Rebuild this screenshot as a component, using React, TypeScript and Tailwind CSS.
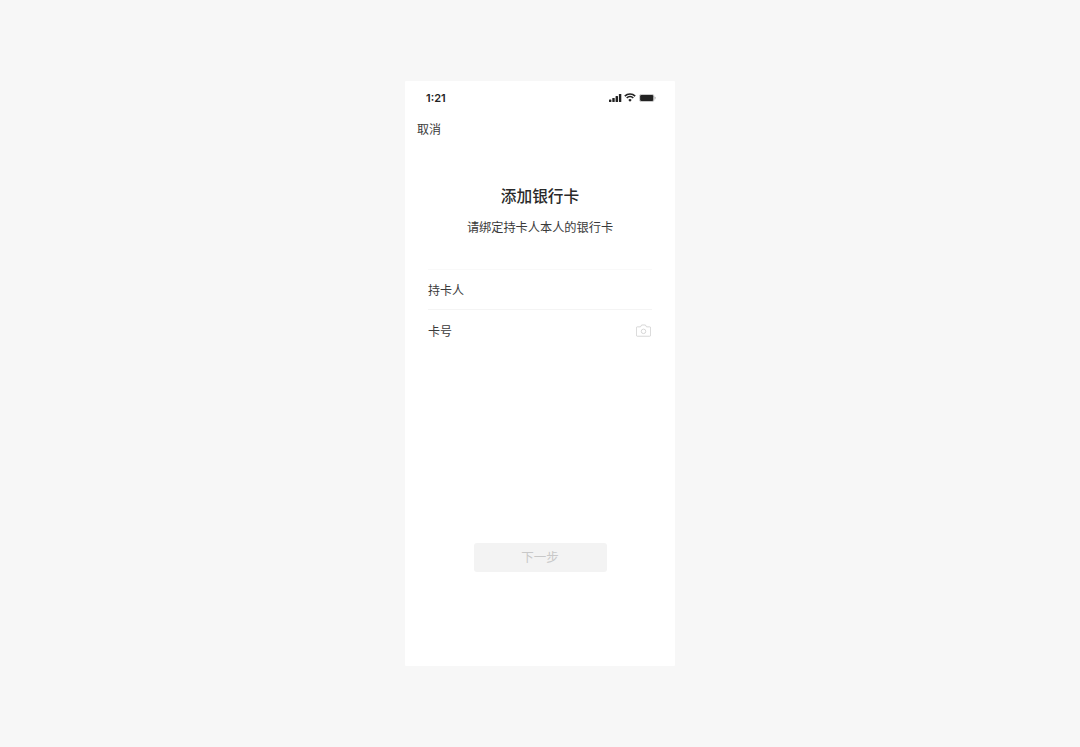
export default function App() {
  const cjk = { fontFamily: '"Noto Sans CJK SC", sans-serif' };
  return (
    <div className="h-[747px] bg-[#f7f7f7] flex justify-center pt-[81px] overflow-hidden" style={cjk}>
      <div className="w-[270px] h-[585px] bg-white rounded-[1px] flex flex-col">
        <div className="h-[34px] flex items-center justify-between pl-[21px] pr-[19px]">
          <span className="text-[11px] font-semibold text-[#222] leading-none font-['Inter']">1:21</span>
          <div className="flex items-center gap-[3px]">
            <svg width="13" height="8" viewBox="0 0 13 8" fill="#222" className="-mr-[1px]">
              <rect x="0" y="5.5" width="2.4" height="2.5" rx=".5" />
              <rect x="3.3" y="4" width="2.4" height="4" rx=".5" />
              <rect x="6.6" y="2" width="2.4" height="6" rx=".5" />
              <rect x="9.9" y="0" width="2.4" height="8" rx=".5" />
            </svg>
            <svg width="12" height="9" viewBox="0 0 12 9" fill="none" stroke="#222" strokeWidth="1.6" className="mb-[1px]">
              <path d="M.8 3.1a7.4 7.4 0 0 1 10.4 0" />
              <path d="M2.7 5a4.7 4.7 0 0 1 6.6 0" />
              <path d="M6 8.8 4.3 6.9a2.4 2.4 0 0 1 3.4 0z" fill="#222" stroke="none" />
            </svg>
            <svg width="17" height="8" viewBox="0 0 17 8">
              <rect x=".4" y=".4" width="14.6" height="7.2" rx="2" fill="none" stroke="#aaa" strokeWidth=".7" />
              <rect x="1.1" y="1.1" width="13.2" height="5.8" rx="1.2" fill="#222" />
              <rect x="15.6" y="2.7" width="1" height="2.6" rx=".5" fill="#bbb" />
            </svg>
          </div>
        </div>
        <div className="h-[28px] pl-[12px] flex items-center text-[12px] leading-none text-[#3a3a3a]">取消</div>
        <h1 className="mt-[43px] text-center text-[15.7px] leading-[19px] font-medium text-[#2a2a2a]">添加银行卡</h1>
        <p className="mt-[12px] text-center text-[12.2px] leading-[20px] text-[#3a3a3a]">请绑定持卡人本人的银行卡</p>
        <div className="mt-[32px] mx-[23px] border-t border-[#f9f9f9] pt-[1px] h-[40px] flex items-center text-[12px] text-[#3a3a3a]">持卡人</div>
        <div className="mx-[23px] border-t border-[#f4f4f4] h-[42px] flex items-center justify-between text-[12px] text-[#3a3a3a]">
          <span>卡号</span>
          <svg width="15" height="13" viewBox="0 0 16 13" fill="none" stroke="#c9c9c9" strokeWidth=".8" className="mr-[1px]">
            <path d="M1.4 2.6h3.4L6 .6h4l1.2 2h3.4a1 1 0 0 1 1 1v8a1 1 0 0 1-1 1H1.4a1 1 0 0 1-1-1v-8a1 1 0 0 1 1-1z" />
            <circle cx="8" cy="7.4" r="2.4" />
          </svg>
        </div>
        <button className="mt-[192px] mx-auto w-[133px] h-[29px] bg-[#f3f3f3] rounded-[3px] text-[12.5px] text-[#c8c8c8] flex items-center justify-center">下一步</button>
      </div>
    </div>
  );
}
